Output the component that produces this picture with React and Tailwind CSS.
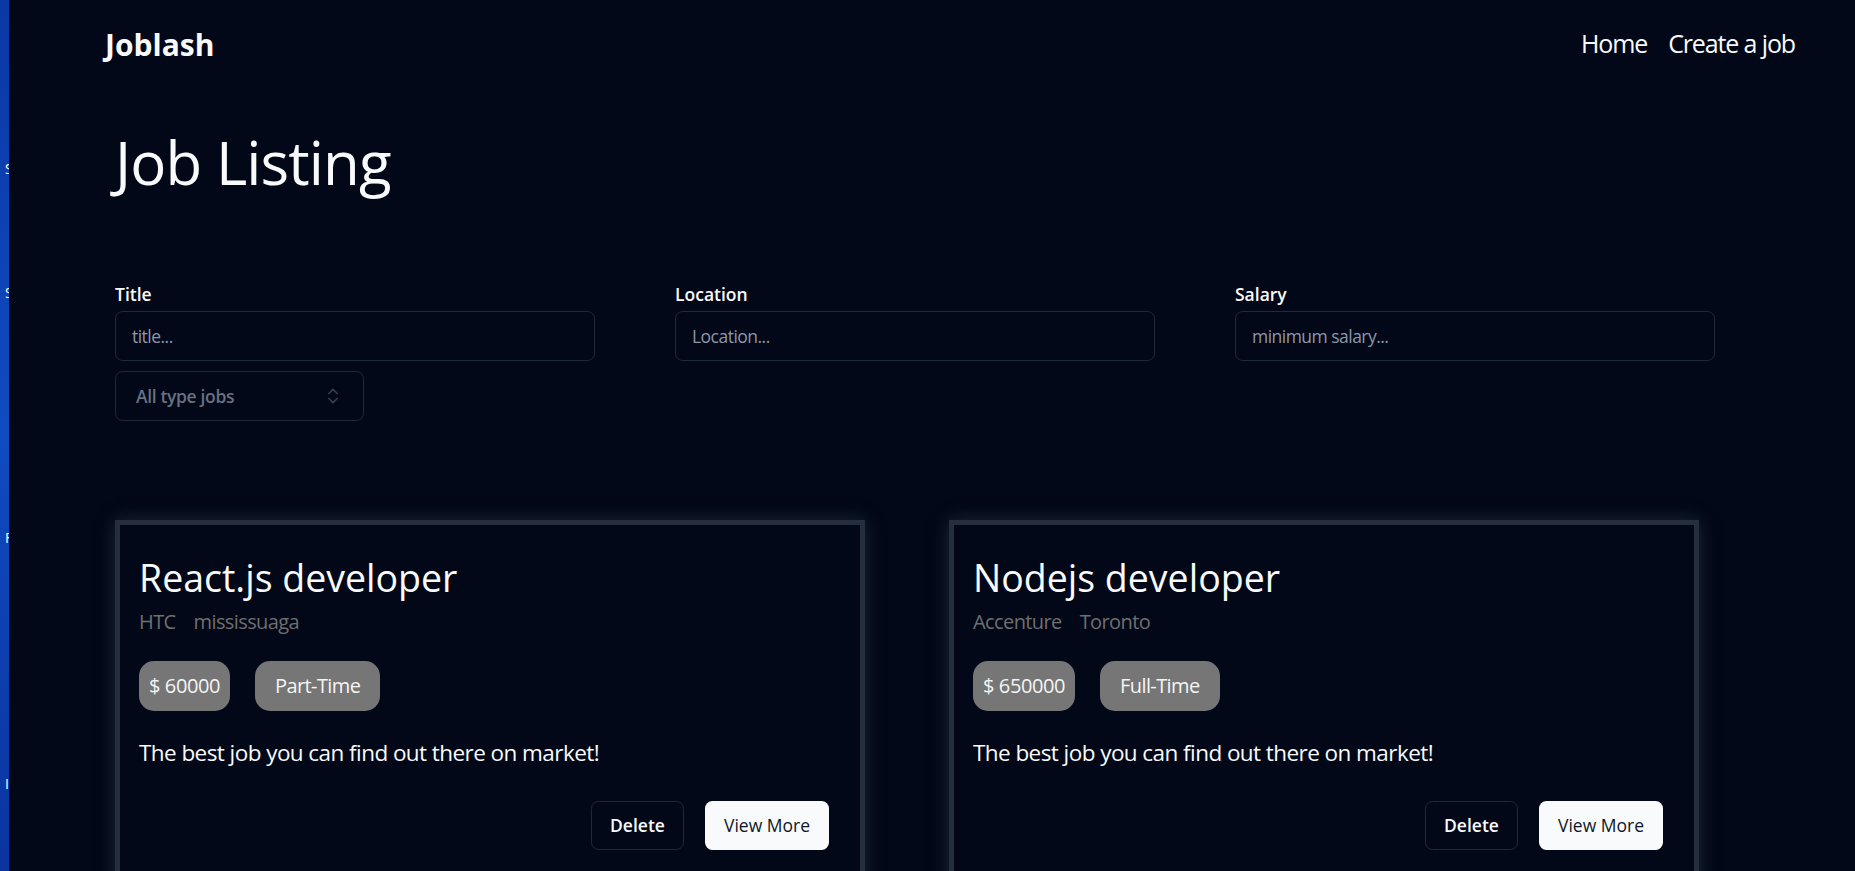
import React from "react";
import { ChevronsUpDown } from "lucide-react";

const jobs = [
  {
    id: 1,
    title: "React.js developer",
    company: "HTC",
    location: "mississuaga",
    salary: "60000",
    type: "Part-Time",
    description: "The best job you can find out there on market!",
  },
  {
    id: 2,
    title: "Nodejs developer",
    company: "Accenture",
    location: "Toronto",
    salary: "650000",
    type: "Full-Time",
    description: "The best job you can find out there on market!",
  },
];

const Field = ({ label, placeholder }) => (
  <div className="flex flex-col w-[480px]">
    <label className="text-[17.5px] leading-[17.5px] font-semibold text-[#f8fafc] mb-[7.5px]">
      {label}
    </label>
    <input
      placeholder={placeholder}
      className="h-[50px] w-full rounded-[7.5px] border border-[#1e293b] bg-transparent pl-[16px] text-[17.5px] tracking-[-0.03em] text-[#f8fafc] placeholder:text-[#8d97aa] outline-none"
    />
  </div>
);

const JobCard = ({ job }) => (
  <div className="w-[750px] border-[5px] border-[#242e3e] shadow-[0_0_16px_rgba(51,65,85,0.55)] pt-[30px] pb-[32px] pl-[19px] pr-[31px]">
    <h2 className="text-[37.5px] leading-[45px] text-[#f8fafc]">{job.title}</h2>
    <div className="flex gap-[18px] mt-[7px] text-[20px] leading-[30px] tracking-[-0.03em] text-[#6f6f6f]">
      <span>{job.company}</span>
      <span>{job.location}</span>
    </div>
    <div className="flex gap-[25px] mt-[23.5px]">
      <span className="h-[50px] flex items-center rounded-[15px] bg-[#767676] px-[10px] text-[20px] tracking-[-0.02em] text-[#f5f5f5]">
        $ {job.salary}
      </span>
      <span className="h-[50px] flex items-center rounded-[15px] bg-[#767676] px-[20px] text-[20px] tracking-[-0.03em] text-[#f5f5f5]">
        {job.type}
      </span>
    </div>
    <p className="mt-[24px] text-[22.5px] leading-[35px] tracking-[-0.025em] text-[#f8fafc]">
      {job.description}
    </p>
    <div className="flex justify-end gap-[21px] mt-[31px]">
      <button className="h-[49px] w-[93px] rounded-[7.5px] border border-[#1e293b] text-[17.5px] font-semibold text-[#f8fafc]">
        Delete
      </button>
      <button className="h-[49px] w-[124px] rounded-[7.5px] bg-[#f8fafc] text-[17.5px] font-medium text-[#0f172a]">
        View More
      </button>
    </div>
  </div>
);

export default function App() {
  return (
    <div className="flex h-[871px] overflow-hidden bg-[#020817] font-['Open_Sans',sans-serif]">
      {/* window edge behind the browser */}
      <div className="relative w-[9px] shrink-0 overflow-hidden bg-gradient-to-b from-[#0a38a6] via-[#0f4bc2] to-[#0a34a0] text-[14px] leading-[18px] text-white">
        <span className="absolute left-[5px] top-[160px]">S</span>
        <span className="absolute left-[5px] top-[284px]">S</span>
        <span className="absolute left-[5px] top-[529px]">F</span>
        <span className="absolute left-[5px] top-[775px]">I</span>
      </div>

      <div className="flex-1 flex flex-col">
        <header className="h-[88px] shrink-0 flex items-center justify-between pl-[96px] pr-[60px]">
          <span className="text-[30px] font-bold text-[#f8fafc]">Joblash</span>
          <nav className="flex gap-[21px] text-[25px] tracking-[-0.045em] text-[#f8fafc]">
            <a href="#">Home</a>
            <a href="#">Create a job</a>
          </nav>
        </header>

        <main className="shrink-0 pl-[106px]">
          <h1 className="mt-[44px] text-[60px] leading-[60px] tracking-[-0.015em] text-[#f8fafc]">
            Job Listing
          </h1>

          <div className="mt-[94px] flex gap-[80px]">
            <Field label="Title" placeholder="title..." />
            <Field label="Location" placeholder="Location..." />
            <Field label="Salary" placeholder="minimum salary..." />
          </div>

          <button className="mt-[10px] h-[50px] w-[249px] flex items-center justify-between rounded-[7.5px] border border-[#1e293b] pl-[20px] pr-[20px] text-[17.5px] font-semibold tracking-[-0.02em] text-[#687183]">
            All type jobs
            <ChevronsUpDown className="w-[20px] h-[20px] opacity-50" />
          </button>

          <div className="mt-[99px] flex gap-[84px]">
            {jobs.map((job) => (
              <JobCard key={job.id} job={job} />
            ))}
          </div>
        </main>
      </div>
    </div>
  );
}
